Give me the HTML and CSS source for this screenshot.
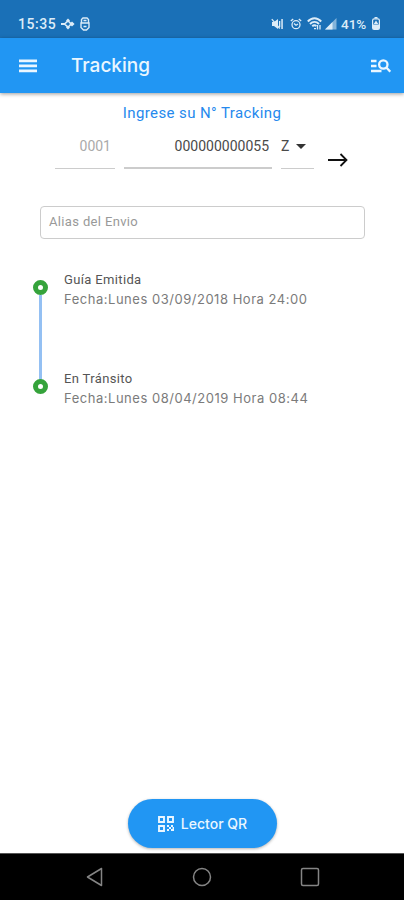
FILE: index.html
```html
<!DOCTYPE html>
<html lang="es">
<head>
  <meta charset="UTF-8">
  <meta name="viewport" content="width=device-width, initial-scale=1">
  <title>Tracking</title>
  <link rel="stylesheet" href="styles.css">
</head>
<body>
  <div class="status-bar">
    <span class="clock">15:35</span>
    <svg class="ic-share" width="14" height="12" viewBox="0 0 14 12" fill="currentColor">
      <path d="M0 5h4v2H0zM7 .5l2 2-2 2-2-2zM7 7.500l2 2-2 2-2-2zM11 3.400L13.600 6 11 8.600 8.400 6z"/>
      <path d="M3.500 6L7 2.800 10.200 6 7 9.200z" fill="none" stroke="currentColor" stroke-width="1.600"/>
    </svg>
    <svg class="ic-app" width="10" height="14" viewBox="0 0 10 14" fill="none" stroke="currentColor" stroke-width="1.400">
      <path d="M1.500 6V2.500L3 1h4l1.500 1.500V6M1 6h8v4.500L6.500 13h-3L1 10.500zM3.500 3.500h3M3.500 9.500h3"/>
    </svg>
    <div class="status-right">
      <svg width="13" height="12" viewBox="0 0 13 12" fill="currentColor">
        <path d="M1 4h2l4-3v10L3 8H1zM8 3h1.300v6H8zM10.300 1h1.500v10h-1.500z"/>
        <path d="M.8 1.200l8 9.300" stroke="currentColor" stroke-width="1.300"/>
      </svg>
      <svg class="ic-alarm" width="12" height="12" viewBox="0 0 12 12" fill="none" stroke="currentColor" stroke-width="1.300">
        <circle cx="6" cy="6.700" r="4"/>
        <path d="M.8 3l2.400-2M11.200 3L8.800 1M4 5.500l2 1.700 2-1.200"/>
      </svg>
      <svg class="ic-wifi" width="15" height="13" viewBox="0 0 15 13" fill="none" stroke="currentColor" stroke-width="1.900">
        <path d="M.8 4.500c4-4.300 9.400-4.300 13.400 0M3 7c2.700-2.800 6.300-2.800 9 0M5.300 9.300c1.200-1.400 3-1.400 4 0"/>
        <path d="M7 11.700h2M10.500 8v4.500M13 8v4.500" stroke-width="1.300"/>
      </svg>
      <svg class="ic-signal" width="12" height="12" viewBox="0 0 12 12" fill="currentColor">
        <path d="M0 11.500L11.500 0v11.500z" opacity=".55"/>
        <path d="M0 11.500L7.500 4v7.500z"/>
      </svg>
      <span class="battery-level">41%</span>
      <svg class="ic-battery" width="8" height="13" viewBox="0 0 8 13" fill="currentColor">
        <path d="M2.500 0h3v1.500h-3z"/>
        <rect x=".6" y="1.900" width="6.800" height="10.500" rx="1.500" fill="none" stroke="currentColor" stroke-width="1.200"/>
        <path d="M1 7.500h6V12H1zM4 3.500L6.300 7H1.700z"/>
      </svg>
    </div>
  </div>

  <header class="app-bar">
    <svg class="ic-menu" width="18" height="14" viewBox="0 0 18 14" fill="currentColor">
      <path d="M0 .6h18v2.600H0zM0 5.600h18v2.600H0zM0 10.600h18v2.600H0z"/>
    </svg>
    <h1>Tracking</h1>
    <svg class="ic-search" width="20" height="14" viewBox="0 0 20 14" fill="none" stroke="currentColor" stroke-width="2.300">
      <path d="M0 2h5.500M0 7h5.500M0 12h10.500M15.300 8.500l4 4.200"/>
      <circle cx="12.300" cy="5.500" r="4.200"/>
    </svg>
  </header>

  <main class="content">
    <h2>Ingrese su N° Tracking</h2>
    <div class="tracking-form">
      <div class="field prefix">0001</div>
      <div class="field number">000000000055</div>
      <div class="field type">Z
        <svg width="10" height="5" viewBox="0 0 10 5" fill="#333"><path d="M0 0h10L5 5z"/></svg>
      </div>
      <svg class="ic-arrow" width="20" height="14" viewBox="0 0 20 14" fill="none" stroke="#111" stroke-width="1.800">
        <path d="M0 7h18.500M12.500 1l6 6-6 6"/>
      </svg>
    </div>

    <div class="alias">Alias del Envio</div>

    <ul class="timeline">
      <li>
        <span class="dot"></span>
        <h3>Guía Emitida</h3>
        <p>Fecha:Lunes 03/09/2018 Hora 24:00</p>
      </li>
      <li>
        <span class="dot"></span>
        <h3>En Tránsito</h3>
        <p>Fecha:Lunes 08/04/2019 Hora 08:44</p>
      </li>
    </ul>

    <button class="qr-btn" type="button">
      <svg width="16" height="16" viewBox="0 0 16 16" fill="none" stroke="currentColor" stroke-width="1.900">
        <path d="M1 1h5v5H1zM10 1h5v5h-5zM1 10h5v5H1z"/>
        <path d="M9 10h2M13 10h2M11 12h2M9 14h2M13 14h3M14.500 12h1.500" stroke-width="2"/>
      </svg>
      <span>Lector QR</span>
    </button>
  </main>

  <nav class="nav-bar">
    <svg width="18" height="20" viewBox="0 0 18 20"><path d="M15.500 1.500v17L1.500 10z"/></svg>
    <svg width="20" height="20" viewBox="0 0 20 20"><circle cx="10" cy="10" r="8.500"/></svg>
    <svg width="20" height="20" viewBox="0 0 20 20"><rect x="1.500" y="1.500" width="17" height="17" rx="1.500"/></svg>
  </nav>
</body>
</html>
```

FILE: styles.css
```css
* {
  box-sizing: border-box;
}
body {
  margin: 0;
  height: 900px;
  display: flex;
  flex-direction: column;
  background: #fff;
  font-family: Roboto, "Liberation Sans", sans-serif;
  overflow: hidden;
}
h1, h2, h3, p, ul {
  margin: 0;
  padding: 0;
  font-weight: 400;
}
svg {
  display: block;
  flex: none;
}
.status-bar {
  height: 38px;
  padding: 9px 24px 0 18px;
  display: flex;
  align-items: center;
  background: #1a70b7;
  color: #dcecf8;
  font-size: 14px;
  font-weight: 500;
}
.clock {
  width: 43px;
  letter-spacing: 0.55px;
}
.ic-app {
  margin-left: 5px;
}
.status-right {
  margin-left: auto;
  display: flex;
  align-items: center;
}
.ic-alarm {
  margin-left: 6px;
}
.ic-wifi {
  margin-left: 5px;
}
.ic-signal {
  margin-left: 3px;
}
.battery-level {
  width: 27px;
  margin-left: 4px;
  font-size: 13.5px;
}
.ic-battery {
  margin-left: 4px;
}
.app-bar {
  height: 55px;
  padding: 0 13px 0 19px;
  display: flex;
  align-items: center;
  background: #2196f3;
  color: #eaf6ff;
  box-shadow: 0 1px 4px rgba(0, 0, 0, 0.4);
  z-index: 1;
}
.app-bar h1 {
  margin-left: 34px;
  font-family: Inter, sans-serif;
  font-size: 19px;
  font-weight: 500;
}
.ic-search {
  margin-left: auto;
}
.content {
  flex: 1;
  display: flex;
  flex-direction: column;
}
.content h2 {
  margin-top: 10px;
  text-align: center;
  font-size: 15px;
  line-height: 20px;
  letter-spacing: 0.4px;
  color: #2589ed;
}
.tracking-form {
  height: 46px;
  padding-left: 55px;
  display: flex;
}
.field {
  height: 46px;
  padding: 14px 4px 0 0;
  border-bottom: 1px solid #ccc;
  font-size: 14px;
  line-height: 18px;
  text-align: right;
  color: #4a4a4a;
}
.prefix {
  width: 60px;
  color: #aaa;
}
.number {
  width: 148px;
  margin-left: 9px;
  padding-right: 3px;
  border-bottom: 2px solid #ccc;
}
.type {
  width: 33px;
  margin-left: 9px;
  padding-right: 8px;
  display: flex;
  justify-content: space-between;
}
.type svg {
  margin-top: 7px;
}
.ic-arrow {
  margin: 30px 0 0 14px;
}
.alias {
  height: 33px;
  margin: 37px 39px 0 40px;
  padding: 0 8px;
  border: 1px solid #ccc;
  border-radius: 4px;
  font-size: 13px;
  line-height: 30px;
  letter-spacing: 0.35px;
  color: #999;
}
.timeline {
  margin: 32px 0 0 40px;
  list-style: none;
}
.timeline li {
  position: relative;
  height: 98.5px;
  padding-left: 24px;
}
.timeline li:first-child::before {
  content: "";
  position: absolute;
  left: -1px;
  top: 24px;
  width: 3px;
  height: 86px;
  background: #94c0f3;
}
.dot {
  position: absolute;
  left: -7px;
  top: 9px;
  width: 15px;
  height: 15px;
  border: 5px solid #35a33b;
  border-radius: 50%;
  background: #fff;
}
.timeline h3 {
  font-size: 13px;
  line-height: 18px;
  letter-spacing: 0.35px;
  color: #555;
}
.timeline p {
  font-family: Inter, sans-serif;
  font-size: 13px;
  line-height: 20px;
  letter-spacing: 0.52px;
  color: #7b7b7b;
}
.qr-btn {
  width: 149px;
  height: 49px;
  margin: auto auto 5px 128px;
  padding: 0;
  border: none;
  border-radius: 25px;
  display: flex;
  align-items: center;
  justify-content: center;
  gap: 7px;
  background: #2196f3;
  box-shadow: 0 1px 3px rgba(0, 0, 0, 0.3);
  color: #eaf6ff;
  font-family: Inter, sans-serif;
  font-size: 14px;
  font-weight: 500;
}
.nav-bar {
  height: 47px;
  padding: 0 84px 0 86px;
  display: flex;
  align-items: center;
  justify-content: space-between;
  background: #000;
  border-top: 1px solid #555;
}
.nav-bar svg {
  fill: none;
  stroke: #858585;
  stroke-width: 1.5;
  stroke-linejoin: round;
}
```
